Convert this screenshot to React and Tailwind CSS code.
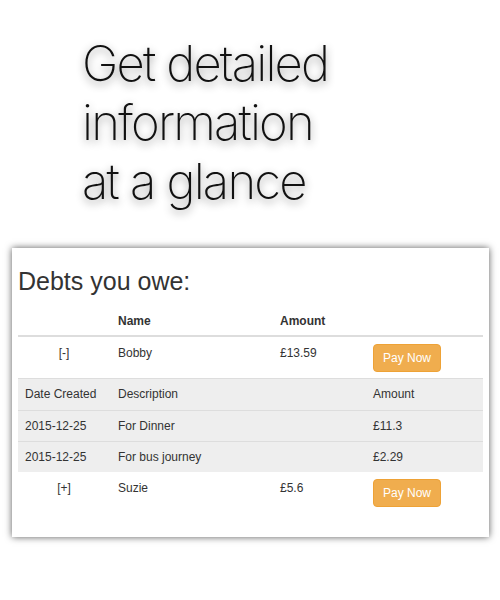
export default function App() {
  const btn =
    "inline-block rounded-[4px] border border-[#eea236] bg-[#f0ad4e] px-[9px] leading-[26px] text-[12px] text-white";
  return (
    <div className="relative h-[600px] w-[500px] bg-white" style={{ fontFamily: '"Liberation Sans", Arial, sans-serif' }}>
      <div
        className="pl-[82px] pt-[34px] text-[49px] leading-[59px] font-extralight tracking-[-1.8px] text-[#111]"
        style={{ fontFamily: 'Inter, sans-serif', textShadow: '0 3px 8px rgba(0,0,0,0.45)' }}
      >
        <div>Get detailed</div>
        <div>information</div>
        <div>at a glance</div>
      </div>
      <div className="ml-[12px] mt-[37px] h-[289px] w-[477px] bg-white px-[6px] pt-[19px] shadow-[0_0_7px_rgba(0,0,0,0.65)]">
        <h3 className="text-[25px] leading-[28px] text-[#333]">Debts you owe:</h3>
        <div className="mt-[9px] text-[12px] leading-[17px] text-[#333]">
          <div className="grid grid-cols-[92px_162px_93px_1fr] border-b-2 border-[#ddd] font-bold">
            <div className="px-2 pt-[9px] pb-[5px]"></div>
            <div className="px-2 pt-[9px] pb-[5px]">Name</div>
            <div className="px-2 pt-[9px] pb-[5px]">Amount</div>
            <div className="px-2 pt-[9px] pb-[5px]"></div>
          </div>
          <div className="grid h-[42px] grid-cols-[92px_162px_93px_1fr] border-b border-[#ddd]">
            <div className="px-2 py-[8px] text-center">[-]</div>
            <div className="px-2 py-[8px]">Bobby</div>
            <div className="px-2 py-[8px]">£13.59</div>
            <div className="px-2 py-[7px]"><span className={btn}>Pay Now</span></div>
          </div>
          <div className="bg-[#eee]">
            {[
              ["Date Created", "Description", "Amount"],
              ["2015-12-25", "For Dinner", "£11.3"],
              ["2015-12-25", "For bus journey", "£2.29"],
            ].map((r, i) => (
              <div key={i} className={`grid h-[31px] grid-cols-[92px_255px_1fr] ${i > 0 ? "border-t border-[#ddd]" : ""}`}>
                <div className="px-[7px] py-[7px]">{r[0]}</div>
                <div className="px-2 py-[7px]">{r[1]}</div>
                <div className="px-2 py-[7px]">{r[2]}</div>
              </div>
            ))}
          </div>
          <div className="grid grid-cols-[92px_162px_93px_1fr]">
            <div className="px-2 py-[8px] text-center">[+]</div>
            <div className="px-2 py-[8px]">Suzie</div>
            <div className="px-2 py-[8px]">£5.6</div>
            <div className="px-2 py-[7px]"><span className={btn}>Pay Now</span></div>
          </div>
        </div>
      </div>
    </div>
  );
}
